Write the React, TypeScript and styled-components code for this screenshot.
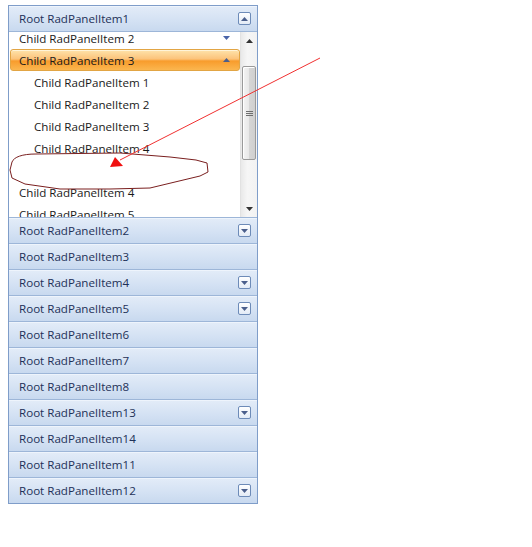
import React from "react";
import styled, { createGlobalStyle } from "styled-components";

const Global = createGlobalStyle`
  html, body {
    margin: 0;
    padding: 0;
    background: #ffffff;
  }
  body {
    font-family: "Open Sans", "Noto Sans", "Liberation Sans", sans-serif;
    font-size: 12px;
  }
`;

const Page = styled.div`
  position: relative;
  width: 532px;
  height: 547px;
  padding: 5px 0 0 8px;
  box-sizing: border-box;
`;

const Panel = styled.div`
  width: 250px;
  border: 1px solid #7f9dc9;
  box-sizing: border-box;
  display: flex;
  flex-direction: column;
  background: #ffffff;
`;

const Header = styled.div<{ $first?: boolean }>`
  height: ${(p) => (p.$first ? 25 : 26)}px;
  box-sizing: border-box;
  display: flex;
  align-items: center;
  justify-content: space-between;
  padding: 0 6px 0 10px;
  background: linear-gradient(#e3ecf8 0%, #d6e3f4 50%, #c8d9ef 100%);
  border-top: ${(p) => (p.$first ? "none" : "1px solid #9db6d8")};
  box-shadow: inset 0 1px 0 #eef4fc;
  color: #1e3158;
  font-size: 11.6px;
  line-height: 1;
`;

const ExpandButton = styled.span`
  width: 13px;
  height: 13px;
  box-sizing: border-box;
  border: 1px solid #6d8bb8;
  border-radius: 2px;
  background: linear-gradient(#ffffff, #e3ebf6);
  display: flex;
  align-items: center;
  justify-content: center;
`;

const Content = styled.div`
  height: 186px;
  display: flex;
  overflow: hidden;
  border-top: 1px solid #9db6d8;
  box-sizing: border-box;
`;

const List = styled.div`
  flex: 1;
  display: flex;
  flex-direction: column;
  margin-top: -5px;
  padding-left: 1px;
  min-width: 0;
`;

const Row = styled.div<{ $level: number; $selected?: boolean }>`
  height: 22px;
  flex: none;
  box-sizing: border-box;
  display: flex;
  align-items: center;
  justify-content: space-between;
  padding: 0 9px 0 ${(p) => (p.$level === 2 ? 23 : 8)}px;
  color: #1a1a1a;
  font-size: 11.6px;
  border: 1px solid ${(p) => (p.$selected ? "#e2a544" : "transparent")};
  border-radius: 3px;
  background: ${(p) =>
    p.$selected
      ? "linear-gradient(#fee3ab 0%, #fcc37a 45%, #f89c2c 55%, #fbb64f 100%)"
      : "transparent"};
  box-shadow: ${(p) => (p.$selected ? "inset 0 1px 0 #fff4d8" : "none")};
`;

const ScrollBar = styled.div`
  width: 17px;
  flex: none;
  display: flex;
  flex-direction: column;
  background: linear-gradient(90deg, #e9e9e9, #f6f6f6 40%, #f2f2f2);
  border-left: 1px solid #e2e2e2;
  box-sizing: border-box;
`;

const ScrollArrow = styled.div`
  height: 17px;
  flex: none;
  display: flex;
  align-items: center;
  justify-content: center;
`;

const Track = styled.div`
  flex: 1;
  display: flex;
  flex-direction: column;
  padding: 17px 1px 40px 1px;
`;

const Thumb = styled.div`
  flex: 1;
  border: 1px solid #9a9a9a;
  border-radius: 2px;
  background: linear-gradient(90deg, #f4f4f4 0%, #e8e8e8 50%, #d6d6d6 51%, #cfcfcf 100%);
  box-shadow: inset 1px 1px 0 #ffffff;
  display: flex;
  align-items: center;
  justify-content: center;
`;

const Overlay = styled.svg`
  position: absolute;
  left: 0;
  top: 0;
  pointer-events: none;
`;

const Tri = ({ up, color = "#4b5f8c", w = 7 }: { up?: boolean; color?: string; w?: number }) => (
  <svg width={w} height={4} viewBox={`0 0 ${w} 4`}>
    <path
      d={up ? `M0 4 L${w / 2} 0 L${w} 4 Z` : `M0 0 L${w} 0 L${w / 2} 4 Z`}
      fill={color}
    />
  </svg>
);

const Grip = () => (
  <svg width={7} height={7} viewBox="0 0 7 7">
    <path d="M0 1.5H7M0 3.5H7M0 5.5H7" stroke="#6e6e6e" strokeWidth={1} />
  </svg>
);

const roots: { label: string; expandable: boolean }[] = [
  { label: "Root RadPanelItem2", expandable: true },
  { label: "Root RadPanelItem3", expandable: false },
  { label: "Root RadPanelItem4", expandable: true },
  { label: "Root RadPanelItem5", expandable: true },
  { label: "Root RadPanelItem6", expandable: false },
  { label: "Root RadPanelItem7", expandable: false },
  { label: "Root RadPanelItem8", expandable: false },
  { label: "Root RadPanelItem13", expandable: true },
  { label: "Root RadPanelItem14", expandable: false },
  { label: "Root RadPanelItem11", expandable: false },
  { label: "Root RadPanelItem12", expandable: true },
];

export default function App() {
  return (
    <Page>
      <Global />
      <Panel>
        <Header $first>
          <span>Root RadPanelItem1</span>
          <ExpandButton>
            <Tri up />
          </ExpandButton>
        </Header>
        <Content>
          <List>
            <Row $level={1}>
              <span>Child RadPanelItem 2</span>
              <Tri color="#4a64a8" />
            </Row>
            <Row $level={1} $selected>
              <span>Child RadPanelItem 3</span>
              <Tri up color="#4b5f8c" />
            </Row>
            <Row $level={2}>Child RadPanelItem 1</Row>
            <Row $level={2}>Child RadPanelItem 2</Row>
            <Row $level={2}>Child RadPanelItem 3</Row>
            <Row $level={2}>Child RadPanelItem 4</Row>
            <Row $level={1} />
            <Row $level={1}>Child RadPanelItem 4</Row>
            <Row $level={1}>Child RadPanelItem 5</Row>
          </List>
          <ScrollBar>
            <ScrollArrow>
              <Tri up color="#333" />
            </ScrollArrow>
            <Track>
              <Thumb>
                <Grip />
              </Thumb>
            </Track>
            <ScrollArrow>
              <Tri color="#333" />
            </ScrollArrow>
          </ScrollBar>
        </Content>
        {roots.map((r) => (
          <Header key={r.label}>
            <span>{r.label}</span>
            {r.expandable && (
              <ExpandButton>
                <Tri />
              </ExpandButton>
            )}
          </Header>
        ))}
      </Panel>
      <Overlay width={532} height={547} viewBox="0 0 532 547">
        <path
          d="M12 162 C14 157 22 154 36 154 L120 153 L170 157 L196 160 L207 163 L208 172 L200 176 L175 182 L150 188 L110 189 L60 189 L25 184 L12 178 L10 170 Z"
          fill="none"
          stroke="#7a1f1f"
          strokeWidth={1}
        />
        <line x1={320} y1={58} x2={120} y2={160} stroke="#f03030" strokeWidth={1} />
        <path d="M110 167 L115 157 L123 166 Z" fill="#f01010" />
      </Overlay>
    </Page>
  );
}
